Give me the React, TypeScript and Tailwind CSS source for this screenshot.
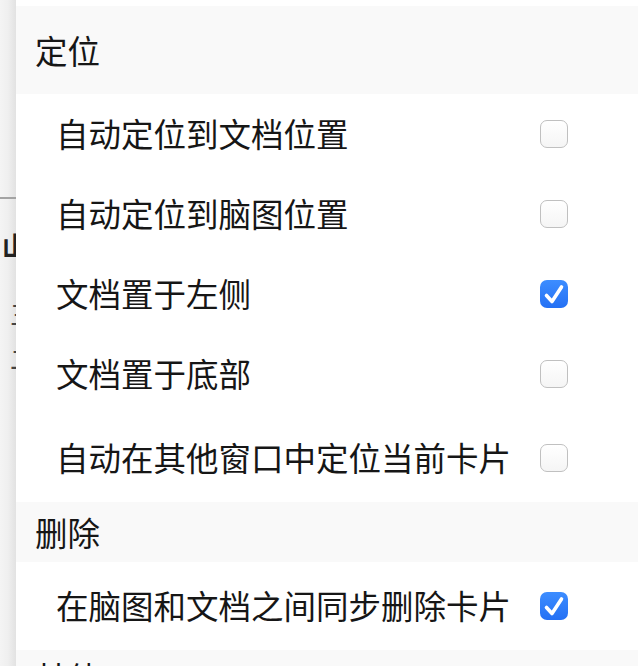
import React from "react";

type Row = { label: string; checked: boolean };
type Section = { title: string; rows: Row[] };

const SECTIONS: Section[] = [
    {
        title: "定位",
        rows: [
            { label: "自动定位到文档位置", checked: false },
            { label: "自动定位到脑图位置", checked: false },
            { label: "文档置于左侧", checked: true },
            { label: "文档置于底部", checked: false },
            { label: "自动在其他窗口中定位当前卡片", checked: false },
        ],
    },
    {
        title: "删除",
        rows: [{ label: "在脑图和文档之间同步删除卡片", checked: true }],
    },
];

function Checkbox({ checked }: { checked: boolean }) {
    if (checked) {
        return (
            <span className="flex h-[28px] w-[28px] shrink-0 items-center justify-center rounded-[7px] bg-gradient-to-b from-[#3d8dff] to-[#2470f4]">
                <svg width="28" height="28" viewBox="0 0 28 28" fill="none">
                    <path
                        d="M6.5 15.5 L12 21.5 L21.5 7"
                        stroke="white"
                        strokeWidth="3.6"
                        strokeLinecap="round"
                        strokeLinejoin="round"
                    />
                </svg>
            </span>
        );
    }
    return (
        <span className="h-[28px] w-[28px] shrink-0 rounded-[7px] border border-[#c0c0c0] bg-gradient-to-b from-white to-[#f5f5f5]" />
    );
}

export default function App() {
    return (
        <div className="flex h-[666px] w-[638px] overflow-hidden bg-white font-['Noto_Sans_CJK_SC',sans-serif] text-[#161616]">
            {/* Window behind the panel */}
            <div className="flex w-[16px] shrink-0 flex-col overflow-hidden bg-gradient-to-r from-[#f4f4f4] via-[#efefef] to-[#e2e2e2]">
                <div className="mt-[197px] h-[2px] w-full shrink-0 bg-[#a3a3a3]" />
                <div className="mt-[31px] ml-[2px] shrink-0 whitespace-nowrap text-[26px] font-bold leading-[30px] text-[#222]">
                    山
                </div>
                <div className="mt-[32px] ml-[10px] shrink-0 whitespace-nowrap text-[26px] leading-[44px] text-[#444]">
                    三<br />二
                </div>
            </div>

            {/* Settings panel */}
            <div className="flex-1 pt-[6px] text-[32.5px] leading-[32px]">
                {SECTIONS.map((section, si) => (
                    <div key={section.title}>
                        <div
                            className={`flex items-center bg-[#f9f9f9] pl-[19px] ${
                                si === 0 ? "h-[88px]" : "h-[60px]"
                            }`}
                        >
                            {section.title}
                        </div>
                        {section.rows.map((row, ri) => (
                            <div
                                key={row.label}
                                className={`flex items-center justify-between pl-[40px] pr-[70px] ${
                                    ri === section.rows.length - 1
                                        ? "h-[88px]"
                                        : "h-[80px]"
                                }`}
                            >
                                <span className="-mt-[3px] whitespace-nowrap">
                                    {row.label}
                                </span>
                                <Checkbox checked={row.checked} />
                            </div>
                        ))}
                    </div>
                ))}
                <div className="h-[60px] bg-[#f9f9f9] pl-[19px] pt-[11px]">
                    其他
                </div>
            </div>
        </div>
    );
}
